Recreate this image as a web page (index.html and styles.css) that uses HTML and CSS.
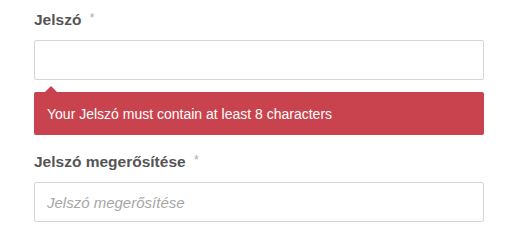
FILE: index.html
```html
<!DOCTYPE html>
<html lang="hu">
<head>
<meta charset="utf-8">
<link rel="stylesheet" href="styles.css">
</head>
<body>
<form class="form">
  <div class="field">
    <label class="label">Jelszó <span class="req">*</span></label>
    <input class="input" type="password">
    <div class="tip">Your Jelszó must contain at least 8 characters</div>
  </div>
  <div class="field field-2">
    <label class="label">Jelszó megerősítése <span class="req">*</span></label>
    <input class="input" type="password" placeholder="Jelszó megerősítése">
  </div>
</form>
</body>
</html>
```
FILE: styles.css
```css
html, body {
  margin: 0;
  padding: 0;
  background: #fff;
}
.form {
  padding: 10px 0 0 34px;
  width: 450px;
  font-family: "Liberation Sans", Arial, sans-serif;
}
.field {
  display: flex;
  flex-direction: column;
}
.field-2 {
  margin-top: 17px;
}
.label {
  font-size: 15.5px;
  font-weight: bold;
  line-height: 20px;
  height: 20px;
  color: #555;
  margin-bottom: 10px;
}
.req {
  font-weight: normal;
  color: #aaa;
  font-size: 12px;
  line-height: 0;
  margin-left: 4px;
  vertical-align: 3px;
}
.input {
  box-sizing: border-box;
  height: 40px;
  width: 100%;
  margin: 0;
  border: 1px solid #d6d6d6;
  border-radius: 2px;
  padding: 0 12px;
  font-family: "Liberation Sans", Arial, sans-serif;
  font-size: 15px;
  background: #fff;
}
.input::placeholder {
  color: #a6a6a6;
  font-style: italic;
}
.tip {
  position: relative;
  margin-top: 12px;
  background: #c9434e;
  color: #fff;
  border-radius: 2px;
  font-size: 14px;
  line-height: 20px;
  padding: 12px 13px 11px;
}
.tip::before {
  content: "";
  position: absolute;
  left: 11px;
  top: -6px;
  border-left: 6px solid transparent;
  border-right: 6px solid transparent;
  border-bottom: 6px solid #c9434e;
}
```
